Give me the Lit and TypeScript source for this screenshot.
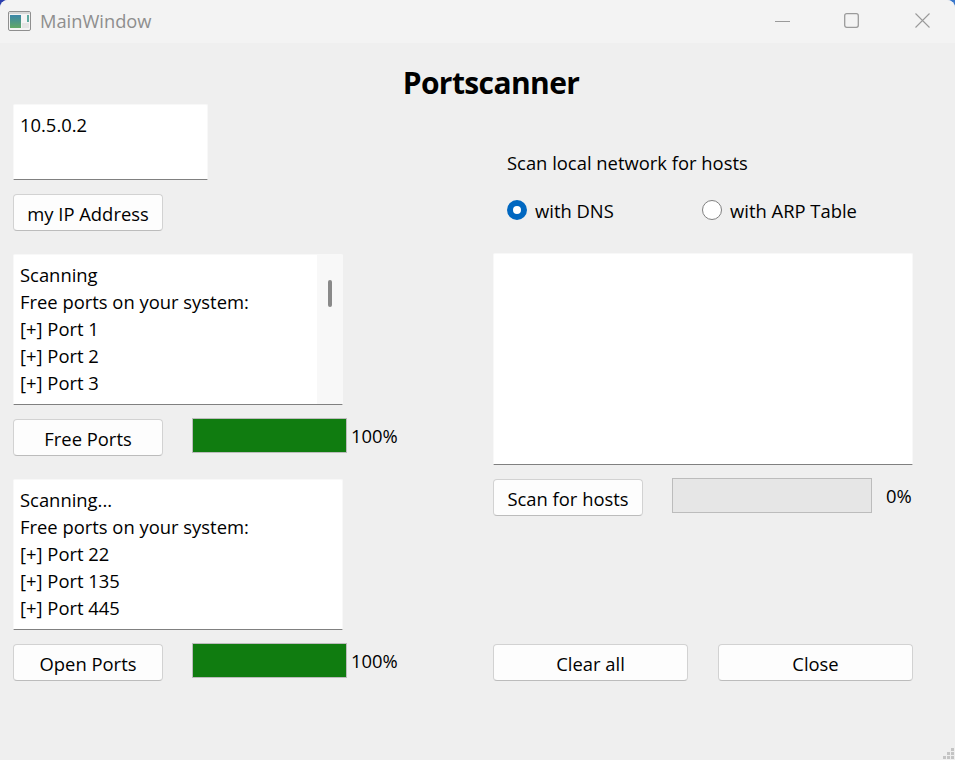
import { LitElement, html, css, svg } from 'lit'
import { customElement } from 'lit/decorators.js'

@customElement('app-root')
export class AppRoot extends LitElement {
  static styles = css`
    :host {
      display: block;
      width: 955px;
      height: 760px;
      background: linear-gradient(90deg, #2b3fae 0%, #3a78cc 100%);
      font-family: 'Open Sans', 'Noto Sans', sans-serif;
      font-size: 18.4px;
      color: #000;
      overflow: hidden;
    }

    .window {
      position: relative;
      height: 760px;
      background: #efefef;
      border-radius: 8px 8px 0 0;
      overflow: hidden;
    }

    .titlebar {
      display: flex;
      align-items: center;
      height: 43px;
      box-sizing: border-box;
      background: #f3f3f3;
      padding: 0 25px 2px 8px;
      color: #8e8e8e;
    }

    .app-icon {
      margin-right: 9px;
    }

    .caption {
      flex: 1;
      font-size: 18.3px;
    }

    .win-btn {
      display: flex;
      margin-left: 54px;
    }

    .win-btn.close {
      margin-left: 56px;
    }

    .heading {
      height: 61px;
      box-sizing: border-box;
      padding: 19px 0 0 27px;
      margin: 0;
      text-align: center;
      font-size: 30px;
      font-weight: 700;
      line-height: 41px;
      letter-spacing: -0.6px;
    }

    .columns {
      display: grid;
      grid-template-columns: 420px 420px;
      column-gap: 60px;
      padding-left: 13px;
    }

    .col {
      display: flex;
      flex-direction: column;
      align-items: flex-start;
    }

    .box {
      box-sizing: border-box;
      background: #fff;
      border: 1px solid #f8f8f8;
      border-bottom: 1px solid #808080;
      border-radius: 2px 2px 0 0;
      line-height: 27px;
      padding: 6px 0 0 6px;
      white-space: pre-line;
    }

    .ip {
      width: 195px;
      height: 76px;
    }

    .log {
      position: relative;
      width: 330px;
      height: 151px;
    }

    .hosts {
      width: 420px;
      height: 212px;
    }

    .track {
      position: absolute;
      top: 0;
      right: 0;
      bottom: 0;
      width: 25px;
      background: #f8f8f8;
    }

    .thumb {
      position: absolute;
      top: 25px;
      left: 11px;
      width: 4px;
      height: 27px;
      border-radius: 2px;
      background: #8a8a8a;
    }

    button {
      box-sizing: border-box;
      width: 150px;
      height: 37px;
      padding: 2px 0 0 0;
      font: inherit;
      color: #000;
      background: #fdfdfd;
      border: 1px solid #d2d2d2;
      border-bottom-color: #bcbcbc;
      border-radius: 4px;
    }

    .my-ip {
      margin-top: 14px;
      margin-bottom: 23px;
    }

    .row {
      display: flex;
      align-items: flex-start;
    }

    .row.first {
      margin-top: 13px;
      margin-bottom: 23px;
    }

    .row.second {
      margin-top: 13px;
    }

    .row button {
      margin-top: 1px;
    }

    .bar {
      box-sizing: border-box;
      height: 35px;
      margin-left: 29px;
      background: #e6e6e6;
      border: 1px solid #bcbcbc;
    }

    .fill {
      height: 100%;
      background: #107c10;
    }

    .pct {
      line-height: 35px;
      margin-left: 4px;
    }

    .hosts-row {
      width: 420px;
      margin-top: 13px;
    }

    .hosts-row .pct {
      margin-left: 14px;
    }

    .scan-label {
      margin: 45px 0 0 14px;
      line-height: 27px;
    }

    .radios {
      display: flex;
      margin: 21px 0 29px 14px;
      line-height: 27px;
    }

    .radio {
      display: flex;
      align-items: center;
      gap: 8px;
    }

    .radio.dns {
      width: 195px;
    }

    .dot {
      box-sizing: border-box;
      width: 20px;
      height: 20px;
      margin-top: -2px;
      border-radius: 50%;
      background: #fff;
      border: 1px solid #808080;
    }

    .dot.on {
      border: 6px solid #0067c0;
    }

    .actions {
      display: flex;
      gap: 30px;
      margin-top: 128px;
    }

    .actions button {
      width: 195px;
    }

    .grip {
      position: absolute;
      right: 0;
      bottom: 0;
    }
  `

  private bar(width: number, percent: number) {
    return html`
      <div class="bar" style="width: ${width}px">
        <div class="fill" style="width: ${percent}%"></div>
      </div>
    `
  }

  private appIcon() {
    return svg`
      <svg class="app-icon" width="23" height="20" viewBox="0 0 23 20">
        <defs>
          <linearGradient id="g" x1="0" y1="0" x2="0" y2="1">
            <stop offset="0" stop-color="#3a86a8" />
            <stop offset="1" stop-color="#62a866" />
          </linearGradient>
        </defs>
        <rect x="0.5" y="0.5" width="22" height="19" rx="1.5" fill="#f4f4f4" stroke="#8f8f8f" />
        <rect x="1" y="1" width="21" height="2" fill="#d8d8d8" />
        <rect x="2" y="4" width="11" height="13" fill="url(#g)" />
        <rect x="19" y="4" width="2" height="7" fill="#5fa9a0" />
        <rect x="14" y="12" width="7" height="5" fill="#e4e4e4" />
      </svg>
    `
  }

  render() {
    return html`
      <div class="window">
        <div class="titlebar">
          ${this.appIcon()}
          <span class="caption">MainWindow</span>
          <span class="win-btn">
            <svg width="15" height="15" viewBox="0 0 15 15"><path d="M0 8.5h15" stroke="#9a9a9a" fill="none" /></svg>
          </span>
          <span class="win-btn">
            <svg width="15" height="15" viewBox="0 0 15 15"><rect x="0.7" y="0.7" width="13.6" height="13.6" rx="2" stroke="#9a9a9a" stroke-width="1.3" fill="none" /></svg>
          </span>
          <span class="win-btn close">
            <svg width="15" height="15" viewBox="0 0 15 15"><path d="M0.5 0.5l14 14M14.5 0.5l-14 14" stroke="#9a9a9a" stroke-width="1.1" fill="none" /></svg>
          </span>
        </div>

        <h1 class="heading">Portscanner</h1>

        <div class="columns">
          <div class="col">
            <div class="box ip">10.5.0.2</div>
            <button class="my-ip">my IP Address</button>

            <div class="box log">Scanning
Free ports on your system:
[+] Port 1
[+] Port 2
[+] Port 3<div class="track"><div class="thumb"></div></div></div>
            <div class="row first">
              <button>Free Ports</button>
              ${this.bar(155, 100)}
              <span class="pct">100%</span>
            </div>

            <div class="box log">Scanning...
Free ports on your system:
[+] Port 22
[+] Port 135
[+] Port 445</div>
            <div class="row second">
              <button>Open Ports</button>
              ${this.bar(155, 100)}
              <span class="pct">100%</span>
            </div>
          </div>

          <div class="col">
            <div class="scan-label">Scan local network for hosts</div>
            <div class="radios">
              <label class="radio dns"><span class="dot on"></span>with DNS</label>
              <label class="radio"><span class="dot"></span>with ARP Table</label>
            </div>
            <div class="box hosts"></div>
            <div class="row hosts-row">
              <button>Scan for hosts</button>
              ${this.bar(200, 0)}
              <span class="pct">0%</span>
            </div>
            <div class="actions">
              <button>Clear all</button>
              <button>Close</button>
            </div>
          </div>
        </div>

        <svg class="grip" width="12" height="12" viewBox="0 0 12 12" fill="#c4c4c4">
          <rect x="8" y="0" width="3" height="3" />
          <rect x="4" y="4" width="3" height="3" />
          <rect x="8" y="4" width="3" height="3" />
          <rect x="0" y="8" width="3" height="3" />
          <rect x="4" y="8" width="3" height="3" />
          <rect x="8" y="8" width="3" height="3" />
        </svg>
      </div>
    `
  }
}
